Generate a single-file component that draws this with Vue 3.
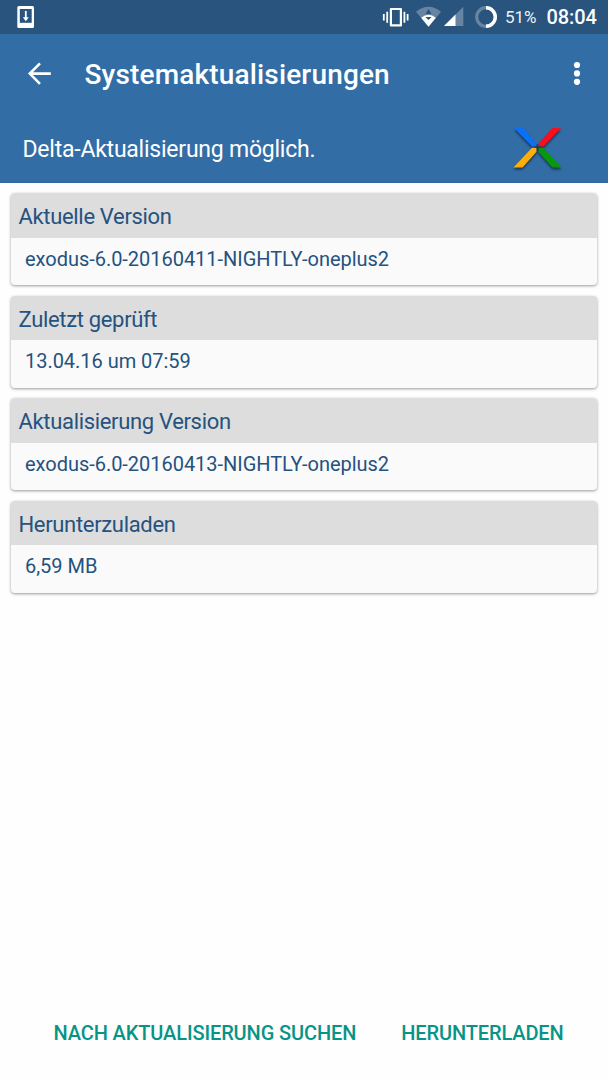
<template>
  <div class="screen">
    <div class="status-bar">
      <svg class="icon-update" width="18" height="22" viewBox="0 0 18 22">
        <rect x="0.3" y="0" width="16.7" height="22" rx="1.5" fill="#fff" />
        <rect x="2.8" y="3" width="11.9" height="13.8" fill="#29547d" />
        <path d="M8.8 4.9V12" stroke="#fff" stroke-width="1.8" />
        <path d="M5.8 11.2h6L8.8 15.2z" fill="#fff" />
      </svg>
      <svg class="icon-status" width="108" height="34" viewBox="0 0 108 34">
        <!-- vibrate -->
        <rect x="8.9" y="9" width="10" height="16.4" fill="none" stroke="#fff" stroke-width="2.2" stroke-linejoin="round" />
        <path d="M1.8 14v6.5M5.2 11.7v11M22.4 11.7v11M25.6 14v6.5" stroke="#fff" stroke-width="1.8" />
        <!-- wifi -->
        <path d="M34 11.7Q46.5 1.8 59 11.7L46.5 26.8z" fill="#6785a2" />
        <path d="M39.2 17.7Q46.5 11.8 53.8 17.7L46.5 26.8z" fill="#fff" />
        <path d="M46.5 9l3 5h-6z" fill="#29547d" />
        <path d="M43.4 17h6.2l-3.1 3z" fill="#29547d" />
        <!-- signal -->
        <path d="M62 26L81.3 6.8V26z" fill="#6785a2" />
        <path d="M62 26L73.5 14.6V26z" fill="#fff" />
      </svg>
      <svg class="icon-battery" width="22" height="22" viewBox="0 0 22 22">
        <circle cx="11" cy="11" r="9.3" fill="none" stroke="#6785a2" stroke-width="3.2" />
        <path d="M11 1.7a9.3 9.3 0 0 1 0 18.6" fill="none" stroke="#fff" stroke-width="3.4" />
      </svg>
      <span class="battery-text">51%</span>
      <span class="clock">08:04</span>
    </div>

    <header class="header">
      <div class="toolbar">
        <svg class="icon-back" width="24" height="24" viewBox="0 0 24 24">
          <path d="M13 1.4L2.8 11.6l10.2 10.2M2.8 11.6H23.8" fill="none" stroke="#fff" stroke-width="2.6" />
        </svg>
        <h1 class="title">Systemaktualisierungen</h1>
        <svg class="icon-menu" width="8" height="26" viewBox="0 0 8 26">
          <circle cx="4" cy="4" r="3.1" fill="#fff" />
          <circle cx="4" cy="12.4" r="3.1" fill="#fff" />
          <circle cx="4" cy="20.8" r="3.1" fill="#fff" />
        </svg>
      </div>
      <div class="summary">
        <span class="summary-text">Delta-Aktualisierung möglich.</span>
        <svg class="logo" width="56" height="50" viewBox="0 0 56 50">
          <path fill="#0b70f5" d="M5 4h9.5l13 16.5v2h-4.5z" />
          <path fill="#fb0d1b" d="M43.5 4H52L34.5 22.5h-5v-3z" />
          <path fill="#ffae0c" d="M23 23.8h4.5v4L13.5 43.5H4.5z" />
          <path fill="#08980f" d="M29.5 23.8h5L52.5 43.5h-9L29.5 28z" />
          <path d="M28.5 20v7M25.5 23.2h6" stroke="#173e56" stroke-width="1.3" />
        </svg>
      </div>
    </header>

    <main class="cards">
      <section v-for="item in items" :key="item.label" class="card">
        <h2 class="card-label">{{ item.label }}</h2>
        <p class="card-value">{{ item.value }}</p>
      </section>
    </main>

    <footer class="actions">
      <button type="button" class="btn btn-check">NACH AKTUALISIERUNG SUCHEN</button>
      <button type="button" class="btn btn-download">HERUNTERLADEN</button>
    </footer>
  </div>
</template>

<script setup>
import { ref } from 'vue'

const items = ref([
  { label: 'Aktuelle Version', value: 'exodus-6.0-20160411-NIGHTLY-oneplus2' },
  { label: 'Zuletzt geprüft', value: '13.04.16 um 07:59' },
  { label: 'Aktualisierung Version', value: 'exodus-6.0-20160413-NIGHTLY-oneplus2' },
  { label: 'Herunterzuladen', value: '6,59 MB' }
])
</script>

<style>
body {
  margin: 0;
  background: #fff;
}
</style>

<style scoped>
.screen {
  display: flex;
  flex-direction: column;
  width: 608px;
  height: 1080px;
  overflow: hidden;
  background: #fefefe;
  font-family: Roboto, "Liberation Sans", sans-serif;
}

svg {
  display: block;
  flex: none;
}

.status-bar {
  display: flex;
  align-items: center;
  height: 34px;
  flex: none;
  padding-left: 17px;
  background: #29547d;
  color: #fff;
  white-space: nowrap;
}

.icon-status {
  margin-left: 347px;
}

.icon-battery {
  margin-left: -15px;
}

.battery-text {
  width: 41.5px;
  margin-left: 8px;
  font-size: 17px;
  line-height: 34px;
  color: #edf1f5;
}

.clock {
  font-size: 20px;
  font-weight: 500;
  line-height: 35px;
  letter-spacing: -0.1px;
}

.header {
  flex: none;
  box-sizing: border-box;
  height: 149px;
  background: #336da6;
  border-bottom: 1px solid #34679f;
  color: #fff;
}

.toolbar {
  display: flex;
  align-items: center;
  height: 79px;
  padding: 0 27px;
}

.title {
  flex: 1;
  margin: 2px 0 0 33.5px;
  font-size: 28px;
  font-weight: 500;
  line-height: 36px;
  letter-spacing: 0.16px;
}

.summary {
  display: flex;
  align-items: center;
  justify-content: space-between;
  height: 72px;
  padding: 0 43px 0 22.5px;
}

.summary-text {
  padding-top: 1px;
  font-size: 23px;
  line-height: 30px;
  letter-spacing: -0.23px;
}

.logo {
  filter: drop-shadow(0 2px 1px rgba(0, 0, 0, 0.5));
}

.cards {
  display: flex;
  flex-direction: column;
  flex: 1;
  gap: 10.5px;
  padding: 10px 11px 0;
}

.card {
  height: 92px;
  overflow: hidden;
  border-radius: 4px;
  background: #fafafa;
  box-shadow: 0 1px 3px rgba(0, 0, 0, 0.4);
  color: #25527f;
}

.card-label {
  height: 44.5px;
  margin: 0;
  padding-left: 7.5px;
  background: #ddd;
  font-size: 22px;
  font-weight: 400;
  line-height: 48px;
  letter-spacing: -0.33px;
}

.card-value {
  margin: 0;
  padding-left: 14px;
  font-size: 20px;
  line-height: 42px;
  letter-spacing: -0.03px;
}

.actions {
  display: flex;
  gap: 45px;
  flex: none;
  height: 64px;
  padding-left: 53.5px;
}

.btn {
  height: 34px;
  padding: 0;
  border: none;
  background: none;
  color: #079486;
  font-family: inherit;
  font-size: 20px;
  font-weight: 500;
  line-height: 34px;
  letter-spacing: -0.12px;
  white-space: nowrap;
  cursor: pointer;
}
</style>
